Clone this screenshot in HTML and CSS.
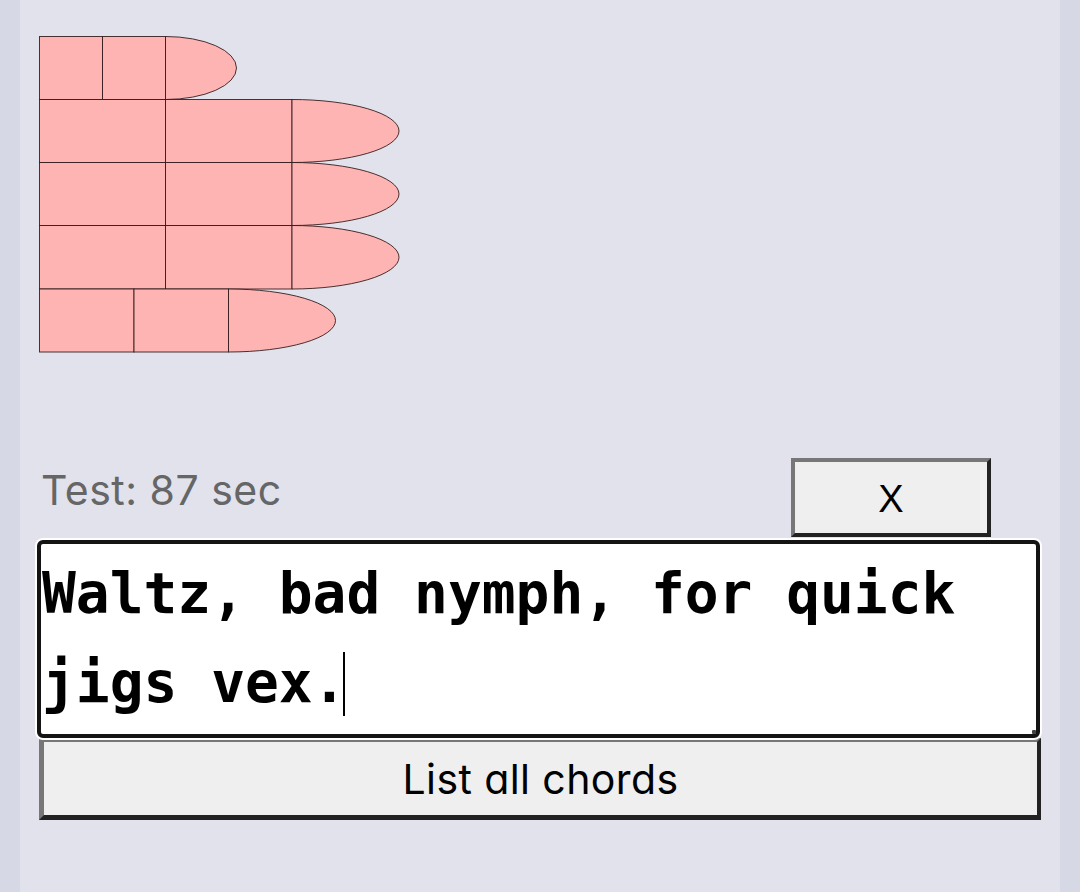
FILE: index.html
```html
<!DOCTYPE html>
<html lang="en">
<head>
<meta charset="utf-8">
<title>Chord trainer</title>
<link rel="stylesheet" href="styles.css">
</head>
<body>
<main class="app">
  <svg class="hand" width="362" height="318" viewBox="0 0 362 318" xmlns="http://www.w3.org/2000/svg">
    <g class="keys">
      <rect x="0.5" y="0.5" width="63" height="63"/>
      <rect x="63.5" y="0.5" width="63" height="63"/>
      <path d="M126.5 0.5 A71 31.5 0 0 1 126.5 63.5 Z"/>

      <rect x="0.5" y="63.5" width="126" height="63"/>
      <rect x="126.5" y="63.5" width="126.5" height="63"/>
      <path d="M253 63.5 A107 31.5 0 0 1 253 126.5 Z"/>

      <rect x="0.5" y="126.5" width="126" height="63"/>
      <rect x="126.5" y="126.5" width="126.5" height="63"/>
      <path d="M253 126.5 A107 31.5 0 0 1 253 189.5 Z"/>

      <rect x="0.5" y="189.5" width="126" height="63.5"/>
      <rect x="126.5" y="189.5" width="126.5" height="63.5"/>
      <path d="M253 189.5 A107 31.75 0 0 1 253 253 Z"/>

      <rect x="0.5" y="253" width="94.5" height="63"/>
      <rect x="95" y="253" width="94.5" height="63"/>
      <path d="M189.5 253 A107 31.5 0 0 1 189.5 316 Z"/>
    </g>
  </svg>

  <div class="timer-row">
    <div class="timer">Test: 87 sec</div>
    <button class="btn btn-close" type="button">X</button>
  </div>

  <div class="editor" role="textbox" aria-multiline="true">Waltz, bad nymph, for quick jigs vex.<span class="caret"></span></div>

  <button class="btn btn-list" type="button">List all chords</button>
</main>
</body>
</html>
```

FILE: styles.css
```css
html, body {
  margin: 0;
  padding: 0;
}

body {
  background: #d6d8e6;
  min-height: 892px;
}

.app {
  margin: 0 20px;
  min-height: 892px;
  box-sizing: border-box;
  background: #e1e2ec;
  padding: 36px 19px 0 19px;
  display: flex;
  flex-direction: column;
}

.hand {
  display: block;
  overflow: visible;
}

.keys rect,
.keys path {
  fill: #ffb4b4;
  stroke: #2a1414;
  stroke-width: 1;
  stroke-opacity: 0.85;
}

.timer-row {
  margin-top: 104px;
  display: flex;
  justify-content: space-between;
  align-items: flex-start;
  padding-right: 50px;
}

.timer {
  font-family: Inter, "Open Sans", sans-serif;
  font-size: 41px;
  line-height: 48px;
  padding-top: 8px;
  padding-left: 2px;
  color: #666666;
  letter-spacing: 0.5px;
}

.btn {
  box-sizing: border-box;
  background: #efefef;
  border-style: solid;
  border-width: 4px;
  border-color: #777777 #222222 #222222 #777777;
  color: #000;
  padding: 0;
  margin: 0;
  cursor: pointer;
}

.btn-close {
  width: 200px;
  height: 79px;
  font-family: "Liberation Sans", Arial, sans-serif;
  font-size: 38px;
  padding-top: 4px;
}

.editor {
  box-sizing: border-box;
  margin: 3px 1px 0 -2px;
  height: 198px;
  background: #ffffff;
  border: 4px solid #141414;
  border-radius: 6px;
  box-shadow: 0 0 0 2px #ffffff;
  padding: 5px 0 0 1px;
  font-family: "DejaVu Sans Mono", monospace;
  font-weight: bold;
  font-size: 56.2px;
  line-height: 89px;
  color: #000;
  white-space: pre-wrap;
  word-wrap: break-word;
  position: relative;
}

.editor::after {
  content: "";
  position: absolute;
  right: 0;
  bottom: 0;
  width: 4px;
  height: 4px;
  background: #444;
  border-radius: 1px;
}

.caret {
  display: inline-block;
  width: 2px;
  height: 64px;
  background: #000;
  vertical-align: -14px;
  margin-left: -3px;
}

.btn-list {
  width: 100%;
  height: 82px;
  border-width: 4px 4px 5px 5px;
  font-family: Inter, "Open Sans", sans-serif;
  font-feature-settings: "cv11" 1;
  font-size: 41px;
  letter-spacing: 0.4px;
}
```
